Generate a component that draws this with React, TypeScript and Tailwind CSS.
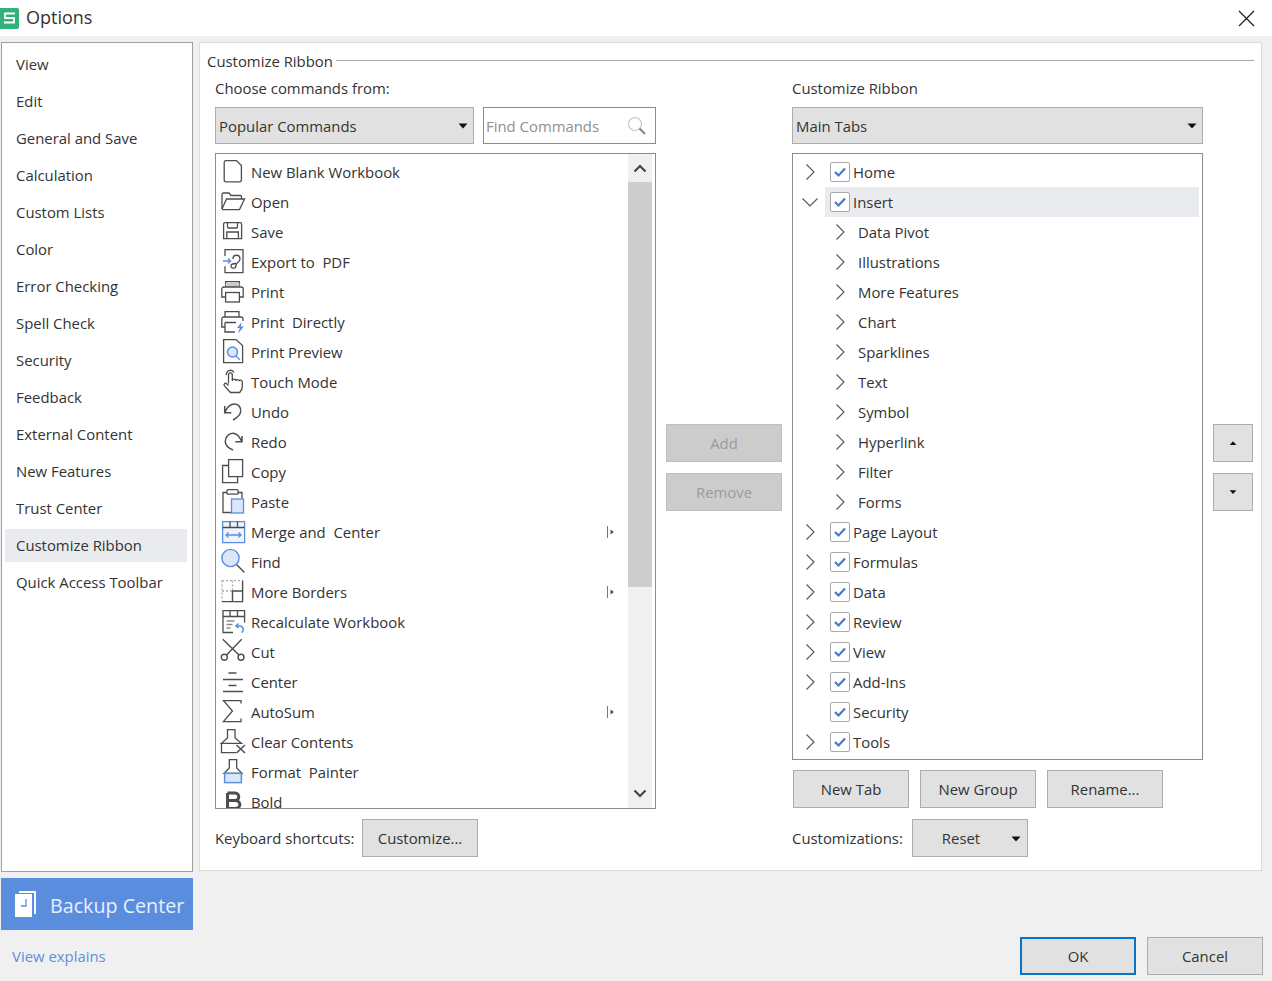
import type { ReactNode } from "react"

const S = "#4d4d4d"
const B = "#5b8fdf"
const L = "#dbe6f8"

function Glyph({ children }: { children: ReactNode }) {
  return (
    <svg width="26" height="30" viewBox="0 0 26 30" fill="none" stroke={S} strokeWidth="1.3" className="shrink-0">
      {children}
    </svg>
  )
}

const commands: { label: string; more?: boolean; icon: ReactNode }[] = [
  { label: "New Blank Workbook", icon: <path d="M6 3.600h10.500L21.400 8.500V23a1.800 1.800 0 0 1-1.800 1.800H6A1.800 1.800 0 0 1 4.200 23V5.400A1.800 1.800 0 0 1 6 3.600Z" /> },
  { label: "Open", icon: <><path d="M2 22V7.500a1.500 1.500 0 0 1 1.500-1.500H9l2 2.500h9.500a1 1 0 0 1 1 1V12" /><path d="M2 22.600h17.500L24.600 12H6.500L2 22" /></> },
  { label: "Save", icon: <><path d="M5 5.600h15.200a1.400 1.400 0 0 1 1.400 1.400v14.600H3.600V7a1.400 1.400 0 0 1 1.400-1.400Z" /><path d="M7.500 5.600v4.400a1 1 0 0 0 1 1h8a1 1 0 0 0 1-1V5.600M6.800 21.600V15h11.600v6.600" /></> },
  { label: "Export to  PDF", icon: <><path d="M5 9V2.600h18v23H5v-6.400" /><path d="M3 14h7M8 11.500l2.600 2.500L8 16.500" stroke={B} /><path d="M13 12c0-5 7-5 7 0 0 3.500-4 3-4 6.500 0 3.500-5 3.500-5 .5 0-2 2-2.500 5-2.500" /></> },
  { label: "Print", icon: <><path d="M5.600 10V4.600h13.800V10" /><rect x="5.600" y="6" width="13.800" height="4" fill="#c9c9c9" stroke="none" /><path d="M5.600 20H1.800v-8a2 2 0 0 1 2-2h17.400a2 2 0 0 1 2 2v8h-3.800" /><rect x="5.600" y="15.500" width="13.800" height="9.500" /></> },
  { label: "Print  Directly", icon: <><path d="M5 10V4.600h14V10" /><path d="M5 20H1.800v-8a2 2 0 0 1 2-2h17.400a2 2 0 0 1 1.800 2v2" /><path d="M5 15.500h11M5 15.500v9.500h10" /><path d="M21.500 15l-4.500 6h2.800L18 26.500l6-7h-3z" fill={B} stroke="none" /></> },
  { label: "Print Preview", icon: <><path d="M16 2.600H3.600v23h19V8.500z" /><circle cx="12.500" cy="15" r="5" fill={L} stroke={B} strokeWidth="1.500" /><path d="M16 19l4 4" stroke={B} strokeWidth="1.500" /></> },
  { label: "Touch Mode", icon: <><path d="M8.500 16.500V7.800a1.900 1.900 0 0 1 3.800 0V14c0-2.500 3.600-2.500 3.600 0 0-2 3.400-2 3.400.3 0-1.700 3-1.500 3 .7v4.500c0 3-1.600 5-2.600 6H10.500l-6-6.600c-1.400-1.600.6-3.600 2.200-2.200l1.800 1.800" /><path d="M6.500 8a4 4 0 0 1 7.500-2.500" /></> },
  { label: "Undo", icon: <path d="M4.700 9v6.700h6.600M4.700 15.700C7 10 11 7 14.700 7c4 0 6.500 3.500 6 7.700-.5 3.500-3.500 6-7.700 8.300" strokeWidth="1.500" /> },
  { label: "Redo", icon: <path d="M22 9v5.700h-6.700M22 14.700C19.500 9.500 16.500 6.300 13 6.300c-4.500 0-7.700 3.700-7.700 8.400 0 3.500 3.200 6.300 7.700 8.300" strokeWidth="1.500" /> },
  { label: "Copy", icon: <><rect x="8.600" y="2.600" width="14" height="17" /><path d="M8.600 8.500H2.600V25.600h15v-6" /></> },
  { label: "Paste", icon: <><path d="M7 5.500H3v20h9" /><path d="M18 5.500h4v6" /><rect x="7" y="2.600" width="11" height="4.600" rx="1" fill="#fff" /><rect x="11.500" y="12" width="12" height="14" fill={L} stroke={B} strokeWidth="1.300" /></> },
  { label: "Merge and  Center", more: true, icon: <><rect x="2.600" y="4.600" width="22" height="21" stroke={B} fill="#eef3fc" /><path d="M2.600 10.500h22M10 4.600v5.900M17.500 4.600v5.900" stroke={S} /><path d="M6 18h15M8.500 15.500L6 18l2.500 2.500M18.500 15.500L21 18l-2.500 2.500" stroke={B} /></> },
  { label: "Find", icon: <><circle cx="10.500" cy="11" r="8.600" fill={L} stroke={B} strokeWidth="1.400" /><path d="M16.500 17.500l8 8" strokeWidth="1.500" /></> },
  { label: "More Borders", more: true, icon: <><path d="M2 3.600h20.600M2 3.600V24.600M12.500 3.600V14" stroke="#aaa" strokeDasharray="2 2" /><path d="M2 14h10.500" stroke="#aaa" strokeDasharray="2 2" /><path d="M22.600 3.600v21H2M22.600 14H12.500v10.600" strokeWidth="1.400" /></> },
  { label: "Recalculate Workbook", icon: <><path d="M13 25.500H3V3.600h21.600v12" /><path d="M3 9.500h21.600M10 3.600v5.900M17.500 3.600v5.900" /><path d="M6.500 14h8M6.500 17.500h6M6.500 21h4" stroke="#8c8c8c" /><path d="M21.500 25.500c3-1.500 2-6.500-2-6.500h-3M18.500 16.500L16 19l2.500 2" stroke={B} strokeWidth="1.500" /></> },
  { label: "Cut", icon: <><circle cx="4.300" cy="20.300" r="3" strokeWidth="1.400" /><circle cx="21" cy="20.300" r="3" strokeWidth="1.400" /><path d="M2.700 2.300L19 18M21.700 2.300L6.500 18" strokeWidth="1.400" /></> },
  { label: "Center", icon: <path d="M8.500 6h8M3 12.500h20M8.500 18.500h8M3 24.500h20" strokeWidth="1.300" /> },
  { label: "AutoSum", more: true, icon: <path d="M21 6.500V3.600H3.500L12.500 14 3.500 24.600H21v-3" strokeWidth="1.300" /> },
  { label: "Clear Contents", icon: <><path d="M7.500 2.600H15V11l6.500 5.300h-20L7.500 11z" /><path d="M1.500 16.300v9.300H16" /><path d="M16.500 18l8.500 8M25 18l-8.500 8" strokeWidth="1.500" /></> },
  { label: "Format  Painter", icon: <><path d="M9.300 2.600h7.400V11l5.300 5.300H4L9.300 11z" /><rect x="4.600" y="16.300" width="16.800" height="9.300" fill={L} stroke={B} strokeWidth="1.500" /></> },
  { label: "Bold", icon: <path d="M7.500 6h7.500c5 0 5 7.600 0 7.600H7.500M15 13.600c6.500 0 6.500 8 0 8H7.500V6" strokeWidth="3" /> },
]

const sideItems = [
  "View",
  "Edit",
  "General and Save",
  "Calculation",
  "Custom Lists",
  "Color",
  "Error Checking",
  "Spell Check",
  "Security",
  "Feedback",
  "External Content",
  "New Features",
  "Trust Center",
  "Customize Ribbon",
  "Quick Access Toolbar",
]

function Caret({ up, className }: { up?: boolean; className?: string }) {
  return (
    <svg width="10" height="6" viewBox="0 0 10 6" className={className}>
      <path d={up ? "M5 0.500L9.500 5.500H0.500Z" : "M0.500 0.500H9.500L5 5.500Z"} fill="#111" />
    </svg>
  )
}

function Chevron({ open }: { open?: boolean }) {
  return (
    <svg width="18" height="18" viewBox="0 0 18 18" fill="none" stroke="#555" strokeWidth="1.100" className="shrink-0">
      <path d={open ? "M1.500 5.500L9 13l7.500-7.500" : "M5.500 1.500L13 9l-7.500 7.500"} />
    </svg>
  )
}

function Check() {
  return (
    <span className="flex h-[20px] w-[20px] shrink-0 items-center justify-center rounded-[2px] border border-[#a9a9a9] bg-white">
      <svg width="14" height="12" viewBox="0 0 14 12" fill="none" stroke="#4a78c2" strokeWidth="2.200">
        <path d="M2 6l3.500 3.500L12 2.500" />
      </svg>
    </span>
  )
}

function Btn({ children, className = "" }: { children: ReactNode; className?: string }) {
  return <div className={`flex h-[38px] items-center justify-center ${className}`}>{children}</div>
}

const plainBtn = "w-[116px] border border-[#adadad] bg-[#e1e1e1]"
const offBtn = "w-[116px] border border-[#bfbfbf] bg-[#cccccc]"
const arrowBtn = "w-[40px] border border-[#adadad] bg-[#e1e1e1]"

function TabRow({ label, chevron = true, open, active }: { label: string; chevron?: boolean; open?: boolean; active?: boolean }) {
  return (
    <div className="flex h-[30px] items-center pl-[8px]">
      <span className="w-[24px]">{chevron && <Chevron open={open} />}</span>
      <div className={`flex h-[30px] w-[374px] items-center pl-[5px] ${active ? "bg-[#e9ebef]" : ""}`}>
        <Check />
        <span className="ml-[3px]">{label}</span>
      </div>
    </div>
  )
}

function GroupRow({ label }: { label: string }) {
  return (
    <div className="flex h-[30px] items-center pl-[38px]">
      <Chevron />
      <span className="ml-[9px]">{label}</span>
    </div>
  )
}

export default function App() {
  return (
    <div
      className="flex h-[981px] w-[1272px] flex-col overflow-hidden bg-[#f0f0f0] text-[14.9px] text-[#333333]"
      style={{ fontFamily: '"Open Sans", "Noto Sans", sans-serif' }}
    >
      {/* title bar */}
      <div className="flex h-[36px] items-center justify-between bg-white pr-[17px]">
        <div className="flex items-center">
          <svg width="20" height="21" viewBox="0 0 20 21">
            <rect x="-2" width="21" height="21" rx="2" fill="#2fb37a" />
            <path d="M15 5.500H5v4.500h9v4.500H4" fill="none" stroke="#fff" strokeWidth="1.800" />
          </svg>
          <span className="mb-[2px] ml-[6px] text-[18px] leading-none">Options</span>
        </div>
        <svg width="17" height="17" viewBox="0 0 17 17" stroke="#222" strokeWidth="1.300">
          <path d="M1 1l15 15M16 1L1 16" />
        </svg>
      </div>

      <div className="flex pl-[1px] pt-[6px]">
        {/* sidebar */}
        <div className="h-[830px] w-[192px] border border-[#a0a0a0] bg-white pl-[3px] pr-[5px] pt-[5px]">
          <div className="flex flex-col gap-[4px]">
            {sideItems.map((item) => (
              <div
                key={item}
                className={`flex h-[33px] items-center pl-[11px] ${item === "Customize Ribbon" ? "bg-[#e9ebef]" : ""}`}
              >
                {item}
              </div>
            ))}
          </div>
        </div>

        {/* main panel */}
        <div className="ml-[6px] h-[829px] w-[1063px] border border-[#dcdcdc] bg-white pl-[7px] pt-[8px]">
          <div className="flex h-[20px] items-center">
            <span className="leading-[20px]">Customize Ribbon</span>
            <div className="ml-[3px] mr-[7px] h-px flex-1 -translate-y-px bg-[#a8a8a8]" />
          </div>

          <div className="flex pl-[8px] pt-[7px]">
            {/* commands column */}
            <div className="w-[441px]">
              <div className="flex h-[20px] items-center">Choose commands from:</div>
              <div className="mt-[9px] flex gap-[9px]">
                <div className="flex h-[37px] w-[259px] items-center justify-between border border-[#adadad] bg-[#e1e1e1] pl-[3px] pr-[5px] pt-px">
                  <span>Popular Commands</span>
                  <Caret />
                </div>
                <div className="flex h-[37px] flex-1 items-center justify-between border border-[#8c8c8c] bg-white pl-[2px] pr-[8px] pt-px">
                  <span className="text-[#8f8f8f]">Find Commands</span>
                  <svg width="20" height="20" viewBox="0 0 20 20" fill="none">
                    <circle cx="8" cy="8" r="6.500" stroke="#c4c4c4" strokeWidth="1.200" />
                    <path d="M12.500 12.500l5.500 5.500" stroke="#808080" strokeWidth="1.800" />
                  </svg>
                </div>
              </div>
              <div className="mt-[9px] flex h-[656px] border border-[#8c8c8c] bg-white">
                <div className="min-w-0 flex-1 overflow-hidden pl-[4px] pt-[3px]">
                  {commands.map((c) => (
                    <div key={c.label} className="flex h-[30px] items-center pr-[13px]">
                      <Glyph>{c.icon}</Glyph>
                      <span className="ml-[5px] flex-1 whitespace-pre">{c.label}</span>
                      {c.more && (
                        <svg width="8" height="12" viewBox="0 0 8 12" className="shrink-0">
                          <path d="M0.500 0v12" stroke="#777" />
                          <path d="M3.500 3.500l3.500 2.500-3.500 2.500z" fill="#555" />
                        </svg>
                      )}
                    </div>
                  ))}
                </div>
                <div className="mr-[3px] flex w-[24px] shrink-0 flex-col bg-[#f0f0f0]">
                  <div className="flex h-[28px] items-center justify-center">
                    <svg width="14" height="9" viewBox="0 0 14 9" fill="none" stroke="#444" strokeWidth="2.200">
                      <path d="M1.500 7.500L7 2l5.500 5.500" />
                    </svg>
                  </div>
                  <div className="h-[405px] bg-[#cdcdcd]" />
                  <div className="flex flex-1 items-end justify-center pb-[10px]">
                    <svg width="14" height="9" viewBox="0 0 14 9" fill="none" stroke="#444" strokeWidth="2.200">
                      <path d="M1.500 1.500L7 7l5.500-5.500" />
                    </svg>
                  </div>
                </div>
              </div>
              <div className="mt-[10px] flex items-center">
                <span className="w-[147px]">Keyboard shortcuts:</span>
                <Btn className={plainBtn}>Customize...</Btn>
              </div>
            </div>

            {/* add and remove */}
            <div className="ml-[10px] flex w-[116px] flex-col gap-[11px] pt-[346px] text-[#9c9c9c]">
              <Btn className={offBtn}>Add</Btn>
              <Btn className={offBtn}>Remove</Btn>
            </div>

            {/* ribbon column */}
            <div className="ml-[10px] w-[411px]">
              <div className="flex h-[20px] items-center">Customize Ribbon</div>
              <div className="mt-[9px] flex h-[37px] items-center justify-between border border-[#adadad] bg-[#e1e1e1] pl-[3px] pr-[5px] pt-px">
                <span>Main Tabs</span>
                <Caret />
              </div>
              <div className="mt-[9px] h-[607px] border border-[#8c8c8c] bg-white pt-[3px]">
                <TabRow label="Home" />
                <TabRow label="Insert" open active />
                {["Data Pivot", "Illustrations", "More Features", "Chart", "Sparklines", "Text", "Symbol", "Hyperlink", "Filter", "Forms"].map((g) => (
                  <GroupRow key={g} label={g} />
                ))}
                <TabRow label="Page Layout" />
                <TabRow label="Formulas" />
                <TabRow label="Data" />
                <TabRow label="Review" />
                <TabRow label="View" />
                <TabRow label="Add-Ins" />
                <TabRow label="Security" chevron={false} />
                <TabRow label="Tools" />
              </div>
              <div className="mt-[10px] flex gap-[11px] pl-[1px]">
                <Btn className={plainBtn}>New Tab</Btn>
                <Btn className={plainBtn}>New Group</Btn>
                <Btn className={plainBtn}>Rename...</Btn>
              </div>
              <div className="mt-[11px] flex items-center">
                <span className="w-[120px]">Customizations:</span>
                <Btn className={`relative ${plainBtn}`}>
                  <span className="pr-[18px]">Reset</span>
                  <Caret className="absolute right-[6px] top-[16px]" />
                </Btn>
              </div>
            </div>

            {/* move up and down */}
            <div className="ml-[10px] flex w-[40px] flex-col gap-[11px] pt-[346px]">
              <Btn className={arrowBtn}><Caret up className="scale-75" /></Btn>
              <Btn className={arrowBtn}><Caret className="scale-75" /></Btn>
            </div>
          </div>
        </div>
      </div>

      {/* footer */}
      <div className="flex pl-[1px] pt-[6px]">
        <div className="flex h-[52px] w-[192px] items-center bg-[#5b8ddf] pl-[14px]">
          <svg width="22" height="26" viewBox="0 0 22 26" className="shrink-0">
            <path d="M4 0h17v23h-2V2H4z" fill="#fff" />
            <rect x="0" y="3" width="17" height="23" fill="#fff" />
            <path d="M11 8v7H6" fill="none" stroke="#5b8ddf" strokeWidth="1.300" />
          </svg>
          <span className="ml-[13px] mt-[3px] text-[19.700px] text-[#e8f0fd]">Backup Center</span>
        </div>
      </div>
      <div className="flex items-end justify-between pl-[12px] pr-[9px] pt-[7px]">
        <span className="mb-[8px] text-[#5f8fdb]">View explains</span>
        <div className="flex gap-[11px]">
          <Btn className="w-[116px] border-2 border-[#0a74c4] bg-[#e1e1e1]">OK</Btn>
          <Btn className={plainBtn}>Cancel</Btn>
        </div>
      </div>
    </div>
  )
}
